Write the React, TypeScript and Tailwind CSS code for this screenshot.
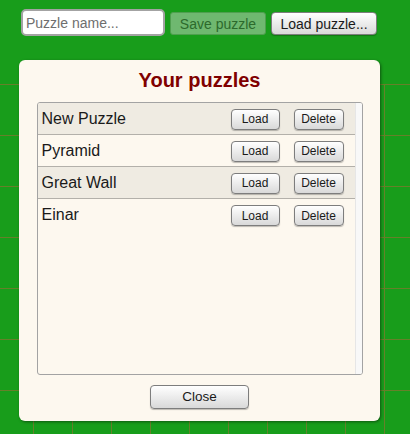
import React from 'react';

const puzzles = ['New Puzzle', 'Pyramid', 'Great Wall', 'Einar'];

const btn =
  'border border-[#7d7d7d] rounded-[4px] bg-linear-to-b from-white to-[#d9d9d9] shadow-[0_1px_1px_rgba(0,0,0,0.25)] text-[#1a1a1a] leading-none';

export default function App() {
  return (
    <div className="relative w-[410px] h-[434px] overflow-hidden bg-[#189d1b] font-['Liberation_Sans',Arial,sans-serif]">
      {/* toolbar */}
      <div className="flex items-start gap-[5px] pl-[21px] pt-[9px]">
        <input
          placeholder="Puzzle name..."
          className="w-[144px] h-[27px] rounded-[5px] bg-white border-2 border-[#a3a3a3] px-[3px] text-[14px] text-black placeholder:text-[#6e6e6e] outline-none"
        />
        <button
          disabled
          className="mt-[3px] w-[96px] h-[23px] rounded-[3px] border border-[#4f9f4f] bg-[#6fb870] text-[14px] text-[#2c6a2c] leading-none"
        >
          Save puzzle
        </button>
        <button className={`mt-[3px] w-[106px] h-[23px] text-[14px] ${btn}`}>Load puzzle...</button>
      </div>

      {/* board */}
      <div className="mt-[48px] ml-[-6px] grid grid-cols-[repeat(11,39px)]">
        {Array.from({ length: 77 }).map((_, i) => (
          <div key={i} className="h-[51px] border-t border-l border-[#66802a]" />
        ))}
      </div>

      {/* dialog */}
      <div className="absolute left-[19px] top-[60px] w-[361px] h-[361px] rounded-[6px] bg-[#fdf8ef] shadow-[1px_1px_3px_rgba(0,0,0,0.45)] flex flex-col items-center pt-[9px]">
        <h2 className="text-[20px] leading-[23px] font-bold text-[#800000]">Your puzzles</h2>

        <div className="mt-[10px] w-[326px] h-[273px] flex border border-[#a3a3a3] rounded-[3px] overflow-hidden">
          <div className="flex-1">
            {puzzles.map((p, i) => (
              <div
                key={p}
                className={`h-[32px] flex items-center pl-[4px] pr-[11px] ${
                  i % 2 === 0 ? 'bg-[#efebe2]' : 'bg-[#fdf8ef]'
                } ${i < puzzles.length - 1 ? 'border-b border-[#b3b0aa]' : ''}`}
              >
                <span className="text-[16px] text-[#1a1a1a]">{p}</span>
                <div className="ml-auto flex gap-[14px] pt-[1px]">
                  <button className={`w-[49px] h-[21px] text-[12px] ${btn}`}>Load</button>
                  <button className={`w-[50px] h-[21px] text-[12px] ${btn}`}>Delete</button>
                </div>
              </div>
            ))}
          </div>
          <div className="w-[7px] bg-[#f8f8f8] border-l border-[#e6e6e6]" />
        </div>

        <button className={`mt-[10px] w-[99px] h-[24px] text-[13.5px] ${btn}`}>Close</button>
      </div>
    </div>
  );
}
